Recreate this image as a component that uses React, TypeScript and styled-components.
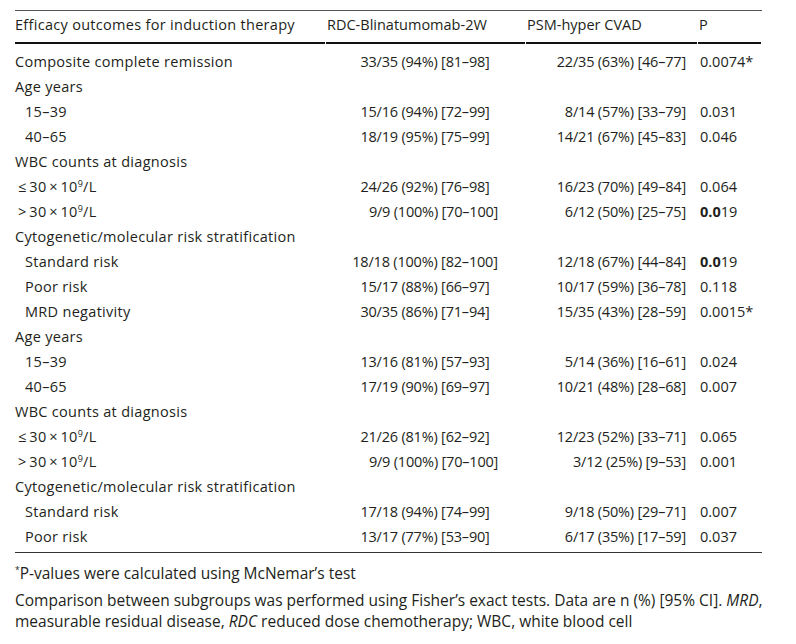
import React from "react";
import styled, { createGlobalStyle } from "styled-components";

const Global = createGlobalStyle`
  html, body { margin: 0; padding: 0; background: #fff; }
  body { font-family: "Open Sans", "Noto Sans", sans-serif; color: #231f20; }
`;

const Page = styled.div`
  padding: 10px 34px 0 15px;
  width: 747px;
`;

const Table = styled.div`
  border-top: 1px solid #555;
  border-bottom: 1px solid #333;
  font-size: 14.5px;
`;

const cols = "311px 200px 172px 64px";

const HeadRow = styled.div`
  display: grid;
  grid-template-columns: ${cols};
`;

const HeadCell = styled.div`
  padding: 1px 0 7px 1px;
  line-height: 25px;
  white-space: nowrap;
  background-image: linear-gradient(#111, #111);
  background-repeat: no-repeat;
  background-position: left bottom;
  background-size: calc(100% - 1px) 2px;
  &:first-child {
    padding-left: 0;
    letter-spacing: 0.3px;
  }
`;

const Body = styled.div`
  padding: 5px 0 3px;
`;

const Row = styled.div`
  display: grid;
  grid-template-columns: ${cols};
  height: 25px;
  line-height: 25px;
  white-space: nowrap;
`;

const Label = styled.div<{ $indent: number }>`
  padding-left: ${(p) => p.$indent}px;
  letter-spacing: 0.3px;
`;

const NumCell = styled.div`
  letter-spacing: -0.2px;
`;

const CenterCell = styled(NumCell)<{ $shift: boolean }>`
  text-align: center;
  padding-right: 2px;
  padding-left: ${(p) => (p.$shift ? 17 : 0)}px;
`;

const RightCell = styled(NumCell)`
  text-align: right;
  padding-right: 12px;
`;

const PCell = styled.div`
  padding-left: 2px;
`;

const Sup = styled.sup`
  font-size: 0.62em;
  line-height: 0;
  vertical-align: 0.55em;
`;

const Notes = styled.div`
  font-size: 15.5px;
  white-space: nowrap;
`;

const Note = styled.p<{ $top: number }>`
  margin: 0;
  padding-top: ${(p) => p.$top}px;
`;

const NoteLine = styled.span`
  display: block;
  height: 21px;
  line-height: 21px;
`;

const Star = styled.sup`
  font-size: 0.55em;
  line-height: 0;
  vertical-align: 0.75em;
`;

type R = {
  label: React.ReactNode;
  indent?: number;
  a?: string;
  b?: string;
  p?: React.ReactNode;
  shift?: boolean;
};

const le = (
  <>
    ≤&#8201;30&#8201;×&#8201;10<Sup>9</Sup>/L
  </>
);
const gt = (
  <>
    &gt;&#8201;30&#8201;×&#8201;10<Sup>9</Sup>/L
  </>
);
const bold19 = (
  <>
    <b>0.0</b>19
  </>
);

const rows: R[] = [
  { label: "Composite complete remission", a: "33/35 (94%) [81–98]", b: "22/35 (63%) [46–77]", p: "0.0074*" },
  { label: "Age years" },
  { label: "15–39", indent: 10, a: "15/16 (94%) [72–99]", b: "8/14 (57%) [33–79]", p: "0.031" },
  { label: "40–65", indent: 10, a: "18/19 (95%) [75–99]", b: "14/21 (67%) [45–83]", p: "0.046" },
  { label: "WBC counts at diagnosis" },
  { label: le, indent: 3, a: "24/26 (92%) [76–98]", b: "16/23 (70%) [49–84]", p: "0.064" },
  { label: gt, indent: 3, a: "9/9 (100%) [70–100]", b: "6/12 (50%) [25–75]", p: bold19, shift: true },
  { label: "Cytogenetic/molecular risk stratification" },
  { label: "Standard risk", indent: 10, a: "18/18 (100%) [82–100]", b: "12/18 (67%) [44–84]", p: bold19 },
  { label: "Poor risk", indent: 10, a: "15/17 (88%) [66–97]", b: "10/17 (59%) [36–78]", p: "0.118" },
  { label: "MRD negativity", indent: 10, a: "30/35 (86%) [71–94]", b: "15/35 (43%) [28–59]", p: "0.0015*" },
  { label: "Age years" },
  { label: "15–39", indent: 10, a: "13/16 (81%) [57–93]", b: "5/14 (36%) [16–61]", p: "0.024" },
  { label: "40–65", indent: 10, a: "17/19 (90%) [69–97]", b: "10/21 (48%) [28–68]", p: "0.007" },
  { label: "WBC counts at diagnosis" },
  { label: le, indent: 3, a: "21/26 (81%) [62–92]", b: "12/23 (52%) [33–71]", p: "0.065" },
  { label: gt, indent: 3, a: "9/9 (100%) [70–100]", b: "3/12 (25%) [9–53]", p: "0.001", shift: true },
  { label: "Cytogenetic/molecular risk stratification" },
  { label: "Standard risk", indent: 10, a: "17/18 (94%) [74–99]", b: "9/18 (50%) [29–71]", p: "0.007" },
  { label: "Poor risk", indent: 10, a: "13/17 (77%) [53–90]", b: "6/17 (35%) [17–59]", p: "0.037" },
];

export default function App() {
  return (
    <Page>
      <Global />
      <Table>
        <HeadRow>
          <HeadCell>Efficacy outcomes for induction therapy</HeadCell>
          <HeadCell>RDC-Blinatumomab-2W</HeadCell>
          <HeadCell>PSM-hyper CVAD</HeadCell>
          <HeadCell>P</HeadCell>
        </HeadRow>
        <Body>
          {rows.map((r, i) => (
            <Row key={i}>
              <Label $indent={r.indent ?? 0}>{r.label}</Label>
              <CenterCell $shift={!!r.shift}>{r.a}</CenterCell>
              <RightCell>{r.b}</RightCell>
              <PCell>{r.p}</PCell>
            </Row>
          ))}
        </Body>
      </Table>
      <Notes>
        <Note $top={10}>
          <NoteLine>
            <Star>*</Star>P-values were calculated using McNemar’s test
          </NoteLine>
        </Note>
        <Note $top={6}>
          <NoteLine>
            Comparison between subgroups was performed using Fisher’s exact tests. Data are n (%) [95% CI]. <i>MRD</i>,
          </NoteLine>
          <NoteLine>
            measurable residual disease, <i>RDC</i> reduced dose chemotherapy; WBC, white blood cell
          </NoteLine>
        </Note>
      </Notes>
    </Page>
  );
}
